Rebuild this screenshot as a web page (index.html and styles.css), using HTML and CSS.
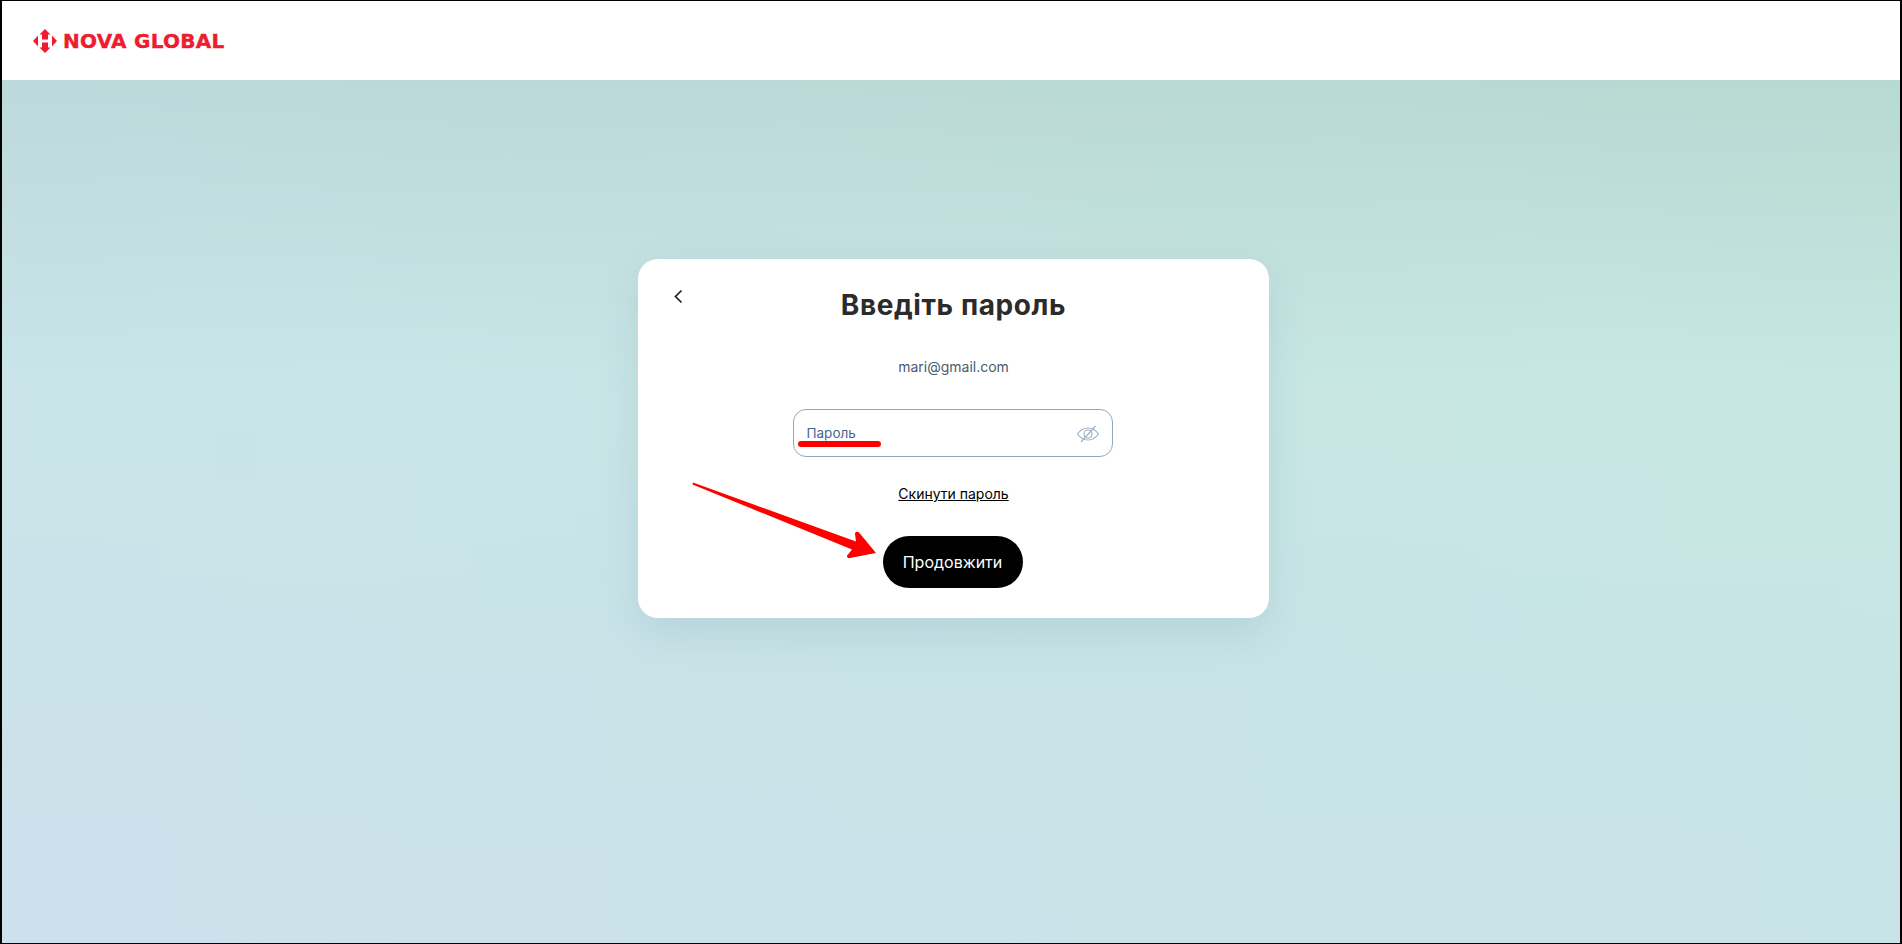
FILE: index.html
```html
<!DOCTYPE html>
<html lang="uk">
<head>
    <meta charset="UTF-8">
    <meta name="viewport" content="width=device-width, initial-scale=1.0">
    <title>Nova Global - Введіть пароль</title>
    <link rel="stylesheet" href="styles.css">
</head>
<body>
    <header class="top-bar">
        <a class="logo" href="#">
            <svg class="logo-mark" viewBox="0 0 24 24" width="24" height="24" aria-hidden="true">
                <path d="M12 0l5.500 5.500H15v5H9v-5H6.500z"/>
                <path d="M12 24l-5.500-5.500H9v-5h6v5h2.500z"/>
                <path d="M0 12l5-5.500v11z"/>
                <path d="M24 12l-5 5.500v-11z"/>
            </svg>
            <span class="logo-text">NOVA GLOBAL</span>
        </a>
    </header>

    <main class="page">
        <section class="card">
            <a class="back" href="#" aria-label="Назад">
                <svg viewBox="0 0 9 15" width="9" height="15" aria-hidden="true">
                    <path d="M7.500 1.500L1.500 7.500l6 6" fill="none" stroke="#222" stroke-width="1.700"/>
                </svg>
            </a>
            <h1>Введіть пароль</h1>
            <p class="email">mari@gmail.com</p>
            <div class="field">
                <span class="field-label">Пароль</span>
                <svg class="eye" viewBox="0 0 24 24" width="24" height="24" aria-hidden="true">
                    <path d="M1.500 12C4.500 7.800 8 6 12 6s7.500 1.800 10.500 6c-3 4.200-6.500 6-10.500 6s-7.500-1.800-10.500-6z"/>
                    <circle cx="12" cy="12" r="4"/>
                    <path d="M5 20L19.500 4"/>
                </svg>
            </div>
            <a class="reset" href="#">Скинути пароль</a>
            <button class="continue">Продовжити</button>

            <!-- red marks drawn over the form -->
            <span class="mark-line"></span>
            <svg class="mark-arrow" viewBox="0 0 190 84" width="190" height="84" aria-hidden="true">
                <path d="M1 .5L164 59.500L163 52C163 50 165 49 167 50.500L184 71L158 76C155 76.500 154 74 156 72.500L160 67.500L.5 2.500z" fill="#f00"/>
            </svg>
        </section>
    </main>
</body>
</html>
```

FILE: styles.css
```css
* {
    box-sizing: border-box;
}
html, body {
    height: 100%;
}
body {
    margin: 0;
    display: flex;
    flex-direction: column;
    border: solid #000;
    border-width: 1px 2px 1px 2px;
    font-family: Inter, "Noto Sans", sans-serif;
    background-color: #fff;
}
.top-bar {
    height: 79px;
    flex-shrink: 0;
    display: flex;
    align-items: center;
    padding-left: 31px;
    background-color: #fff;
}
.logo {
    display: flex;
    align-items: center;
    gap: 6px;
    text-decoration: none;
}
.logo-mark {
    fill: #ee1c2e;
}
.logo-text {
    color: #ee1c2e;
    font-family: "DejaVu Sans", sans-serif;
    font-size: 20px;
    font-weight: 700;
    letter-spacing: 0.25px;
    -webkit-text-stroke: 0.4px #ee1c2e;
}
.page {
    flex: 1;
    display: flex;
    justify-content: center;
    align-items: flex-start;
    padding: 179px 0 0 5px;
    background:
        linear-gradient(to right, rgba(205, 224, 240, 0.35), rgba(190, 235, 215, 0.2)),
        linear-gradient(180deg, #b5d5d0 0%, #c8e7e5 35%, #c9e3e8 70%, #cbe1ea 100%);
}
.card {
    position: relative;
    width: 631px;
    height: 359px;
    display: flex;
    flex-direction: column;
    align-items: center;
    border-radius: 20px;
    background-color: #fff;
    box-shadow: 0 16px 40px rgba(90, 130, 140, 0.16);
}
.back {
    position: absolute;
    left: 36px;
    top: 30px;
    line-height: 0;
}
.card h1 {
    margin: 28px 0 0;
    font-size: 28px;
    line-height: 36px;
    font-weight: 700;
    letter-spacing: 0.6px;
    color: #2b2b2b;
}
.email {
    margin: 35px 0 0;
    font-size: 14px;
    line-height: 18px;
    color: #4a5a70;
}
.field {
    width: 320px;
    height: 48px;
    margin: 33px 2px 0 0;
    padding: 0 12px 0 13px;
    display: flex;
    align-items: center;
    justify-content: space-between;
    border: 1px solid #98a6bd;
    border-radius: 13px;
}
.field-label {
    padding-bottom: 1px;
    font-size: 13.500px;
    color: #47678c;
}
.eye {
    margin-top: 2px;
    fill: none;
    stroke: #9fb0c4;
    stroke-width: 1.200;
}
.reset {
    margin-top: 28px;
    font-size: 14px;
    line-height: 18px;
    color: #000;
    text-decoration: underline;
}
.continue {
    width: 140px;
    height: 52px;
    margin: 33px 2px 0 0;
    border: none;
    border-radius: 26px;
    background-color: #000;
    color: #fff;
    font-family: inherit;
    font-size: 16px;
    cursor: pointer;
}
.mark-line {
    position: absolute;
    left: 160px;
    top: 182px;
    width: 83px;
    height: 6px;
    border-radius: 3px;
    background-color: #f00;
}
.mark-arrow {
    position: absolute;
    left: 54px;
    top: 223px;
}
```
